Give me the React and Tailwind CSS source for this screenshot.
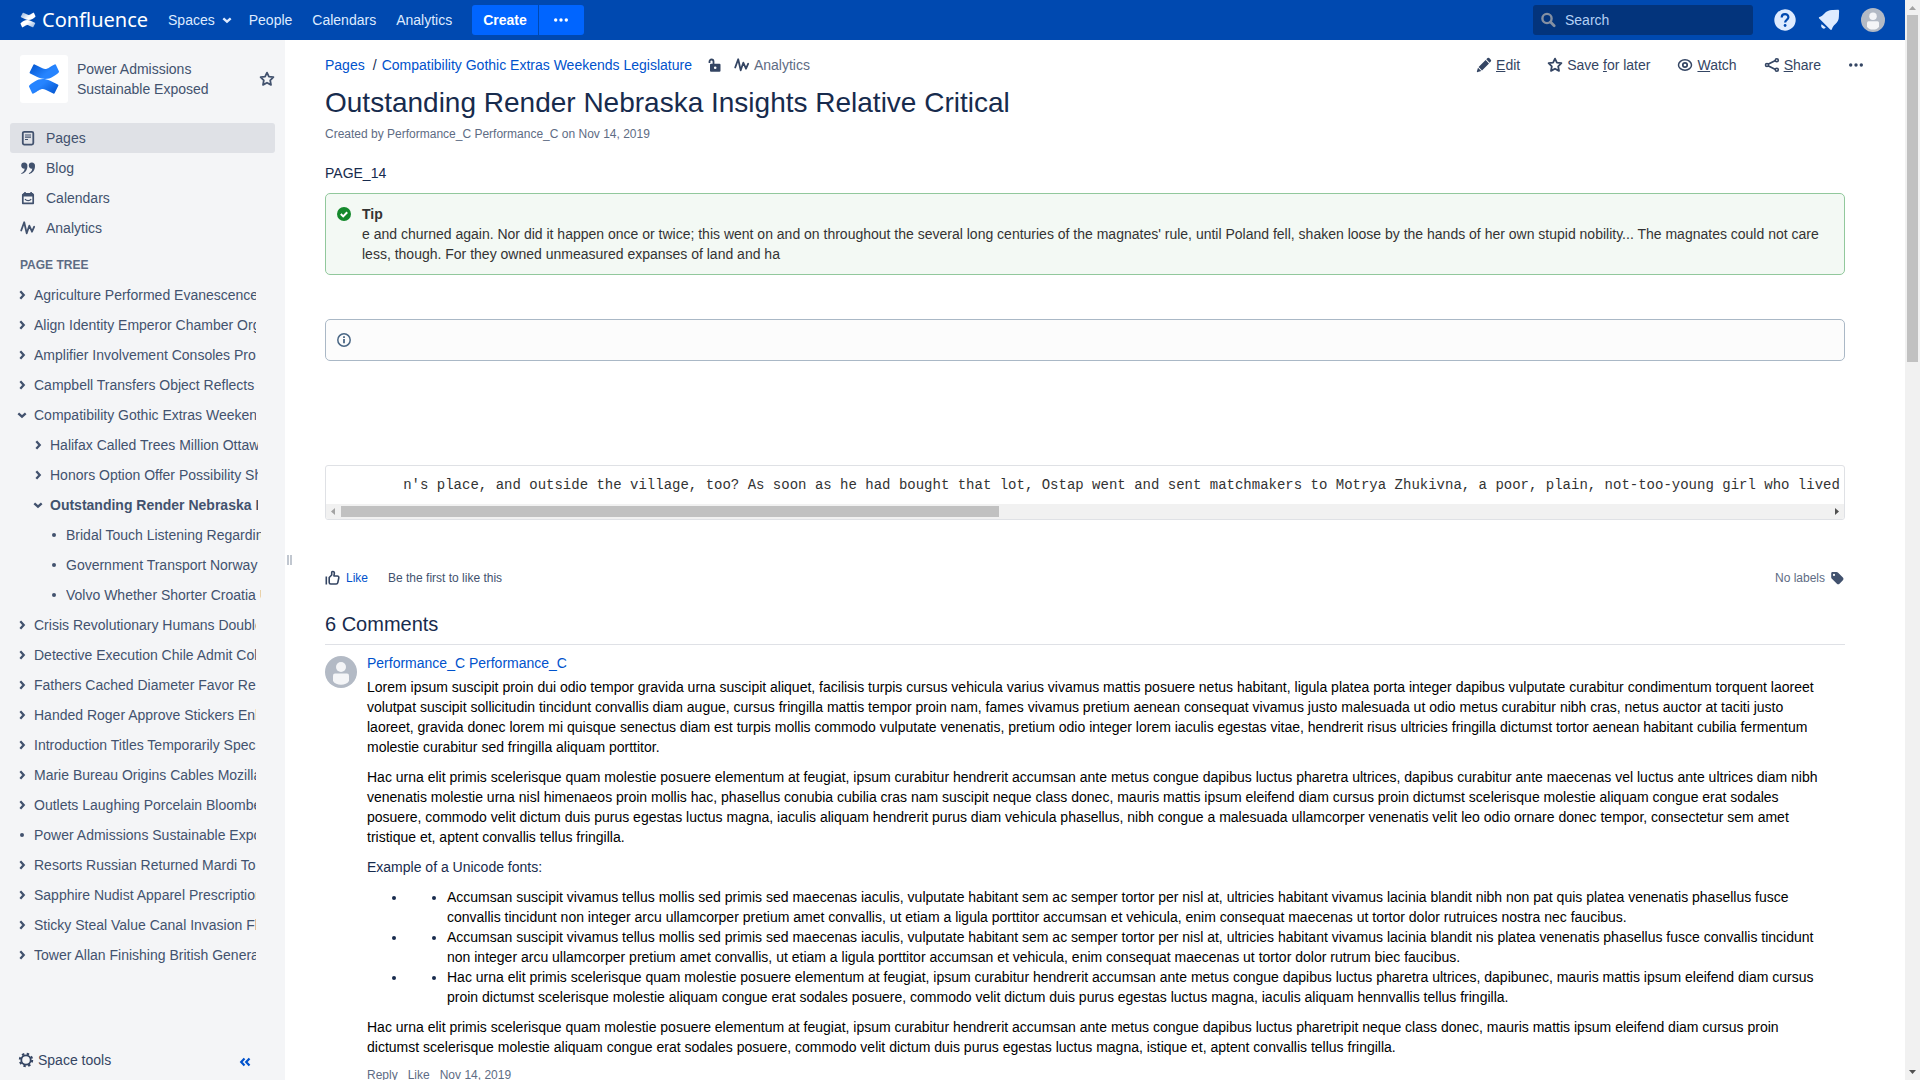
import React from "react";

const spaceLinks = [
  { label: "Pages", icon: PageIcon, active: true },
  { label: "Blog", icon: QuoteIcon },
  { label: "Calendars", icon: CalendarIcon },
  { label: "Analytics", icon: PulseIcon },
];

const tree = [
  { label: "Agriculture Performed Evanescence", kind: "closed", level: 0 },
  { label: "Align Identity Emperor Chamber Organ", kind: "closed", level: 0 },
  { label: "Amplifier Involvement Consoles Pro", kind: "closed", level: 0 },
  { label: "Campbell Transfers Object Reflects", kind: "closed", level: 0 },
  { label: "Compatibility Gothic Extras Weekends", kind: "open", level: 0 },
  { label: "Halifax Called Trees Million Ottawa", kind: "closed", level: 1 },
  { label: "Honors Option Offer Possibility Shore", kind: "closed", level: 1 },
  { label: "Outstanding Render Nebraska Insights", kind: "open", level: 1, current: true },
  { label: "Bridal Touch Listening Regarding", kind: "leaf", level: 2 },
  { label: "Government Transport Norway", kind: "leaf", level: 2 },
  { label: "Volvo Whether Shorter Croatia U", kind: "leaf", level: 2 },
  { label: "Crisis Revolutionary Humans Double", kind: "closed", level: 0 },
  { label: "Detective Execution Chile Admit Col", kind: "closed", level: 0 },
  { label: "Fathers Cached Diameter Favor Re", kind: "closed", level: 0 },
  { label: "Handed Roger Approve Stickers Enh", kind: "closed", level: 0 },
  { label: "Introduction Titles Temporarily Spec", kind: "closed", level: 0 },
  { label: "Marie Bureau Origins Cables Mozilla", kind: "closed", level: 0 },
  { label: "Outlets Laughing Porcelain Bloomberg", kind: "closed", level: 0 },
  { label: "Power Admissions Sustainable Exposed", kind: "leaf", level: 0 },
  { label: "Resorts Russian Returned Mardi To", kind: "closed", level: 0 },
  { label: "Sapphire Nudist Apparel Prescription", kind: "closed", level: 0 },
  { label: "Sticky Steal Value Canal Invasion Fl", kind: "closed", level: 0 },
  { label: "Tower Allan Finishing British General", kind: "closed", level: 0 },
];

const rowPadding = ["pl-4 pr-[29px]", "pl-8 pr-[27px]", "pl-12 pr-6"];

const bullets = [
  "Accumsan suscipit vivamus tellus mollis sed primis sed maecenas iaculis, vulputate habitant sem ac semper tortor per nisl at, ultricies habitant vivamus lacinia blandit nibh non pat quis platea venenatis phasellus fusce convallis tincidunt non integer arcu ullamcorper pretium amet convallis, ut etiam a ligula porttitor accumsan et vehicula, enim consequat maecenas ut tortor dolor rutruices nostra nec faucibus.",
  "Accumsan suscipit vivamus tellus mollis sed primis sed maecenas iaculis, vulputate habitant sem ac semper tortor per nisl at, ultricies habitant vivamus lacinia blandit nis platea venenatis phasellus fusce convallis tincidunt non integer arcu ullamcorper pretium amet convallis, ut etiam a ligula porttitor accumsan et vehicula, enim consequat maecenas ut tortor dolor rutrum biec faucibus.",
  "Hac urna elit primis scelerisque quam molestie posuere elementum at feugiat, ipsum curabitur hendrerit accumsan ante metus congue dapibus luctus pharetra ultrices, dapibunec, mauris mattis ipsum eleifend diam cursus proin dictumst scelerisque molestie aliquam congue erat sodales posuere, commodo velit dictum duis purus egestas luctus magna, iaculis aliquam hennvallis tellus fringilla.",
];

function Svg({ className = "size-4", children, box = "0 0 16 16" }) {
  return (
    <svg viewBox={box} className={className + " shrink-0"} fill="none" aria-hidden="true">
      {children}
    </svg>
  );
}

function Mark({ id, className, from, to }) {
  return (
    <Svg className={className} box="0 0 32 32">
      <defs>
        <linearGradient id={id + "a"} x1="0" y1="0" x2="1" y2="0.6">
          <stop offset="0" stopColor={from} />
          <stop offset="0.7" stopColor={to} />
        </linearGradient>
        <linearGradient id={id + "b"} x1="1" y1="1" x2="0" y2="0.4">
          <stop offset="0" stopColor={from} />
          <stop offset="0.7" stopColor={to} />
        </linearGradient>
      </defs>
      <path fill={"url(#" + id + "a)"} d="M30.8 8.1 28 1.9a1 1 0 0 0-1.4-.5C21 4.2 18.800 7.300 14.500 5.200L6.700 1.500a1 1 0 0 0-1.400.5L1.700 9.200a1 1 0 0 0 .5 1.400l7.600 3.600c9.700 4.400 16.300-.7 20.900-4.800a1 1 0 0 0 .1-1.300Z" />
      <path fill={"url(#" + id + "b)"} d="M1.200 23.900 4 30.100a1 1 0 0 0 1.400.5c5.600-2.800 7.800-5.900 12.100-3.800l7.800 3.700a1 1 0 0 0 1.400-.5l3.600-7.200a1 1 0 0 0-.5-1.400l-7.600-3.600c-9.700-4.400-16.300.7-20.900 4.800a1 1 0 0 0-.1 1.300Z" />
    </Svg>
  );
}

function PageIcon() {
  return (
    <Svg>
      <rect x="2.800" y="1.800" width="10.500" height="12.800" rx="1.500" stroke="currentColor" strokeWidth="1.800" />
      <path d="M5 5h6M5 7.200h6M5 9.500h3" stroke="currentColor" strokeWidth="1.200" />
    </Svg>
  );
}

function QuoteIcon() {
  return (
    <Svg>
      <path
        fill="currentColor"
        d="M4.200 2.500a3.100 3.100 0 0 1 3.200 3.400c0 4-2.100 7-5.900 8.100l-.3-.7c2-.9 3.200-2.200 3.500-4.700A3 3 0 0 1 1.200 5.500a3 3 0 0 1 3-3ZM11.800 2.500A3.100 3.100 0 0 1 15 5.900c0 4-2.100 7-5.900 8.100l-.3-.7c2-.9 3.200-2.200 3.500-4.700a3 3 0 0 1-3.500-3.100 3 3 0 0 1 3-3Z"
      />
    </Svg>
  );
}

function CalendarIcon() {
  return (
    <Svg>
      <path d="M2.800 4.500v8.800h10.400V4.500" stroke="currentColor" strokeWidth="1.700" strokeLinejoin="round" />
      <path fill="currentColor" d="M2 4.500 3.500 3h.7V2h1.600v1h4.500V2h1.600v1h1L14 4.500v2H2Z" />
      <path d="M5 9.200c1.500 2 4.700 2 6.200 0" stroke="currentColor" strokeWidth="1.200" />
    </Svg>
  );
}

function PulseIcon() {
  return (
    <Svg>
      <path d="m1.200 10.500 3-8.200 2.500 11 2.600-7.600 2.700 6 2.200-5" stroke="currentColor" strokeWidth="1.800" strokeLinecap="round" strokeLinejoin="round" />
    </Svg>
  );
}

function StarIcon({ className }) {
  return (
    <Svg className={className}>
      <path d="m8 1.600 1.900 4 4.500.6-3.200 3.100.8 4.600L8 11.700l-4 2.200.8-4.600L1.600 6.200l4.500-.6Z" stroke="currentColor" strokeWidth="1.800" strokeLinejoin="round" />
    </Svg>
  );
}

function PencilIcon() {
  return (
    <Svg>
      <path fill="currentColor" d="M10.300 2.300 11.500 1.100a1.200 1.200 0 0 1 1.700 0l1.600 1.700a1.200 1.200 0 0 1 0 1.700l-1.200 1.200ZM9.600 3l3.400 3.400-7 7-3.400-3.400ZM2 10.700l3.300 3.300-3.500 1.100a.7.7 0 0 1-.9-.9Z" />
    </Svg>
  );
}

function EyeIcon() {
  return (
    <Svg>
      <ellipse cx="8" cy="8" rx="6.500" ry="5.200" stroke="currentColor" strokeWidth="1.500" />
      <circle cx="8" cy="8" r="2.200" stroke="currentColor" strokeWidth="1.700" />
    </Svg>
  );
}

function ShareIcon() {
  return (
    <Svg>
      <path d="m4 7.300 7.500-3.800M4 8.700l7.500 3.800" stroke="currentColor" strokeWidth="1.700" />
      <circle cx="3" cy="8" r="1.500" stroke="currentColor" strokeWidth="1.600" />
      <circle cx="12.800" cy="3.200" r="1.500" stroke="currentColor" strokeWidth="1.600" />
      <circle cx="12.800" cy="12.800" r="1.500" stroke="currentColor" strokeWidth="1.600" />
    </Svg>
  );
}

function DotsIcon() {
  return (
    <Svg>
      <circle cx="2.700" cy="8" r="1.700" fill="currentColor" />
      <circle cx="8" cy="8" r="1.700" fill="currentColor" />
      <circle cx="13.300" cy="8" r="1.700" fill="currentColor" />
    </Svg>
  );
}

function ChevronIcon({ open }) {
  return (
    <Svg className="size-3" box="0 0 12 12">
      <path d={open ? "M2.300 4.300 6 7.700l3.700-3.400" : "M4.300 2.300 7.700 6 4.300 9.700"} stroke="currentColor" strokeWidth="2.300" />
    </Svg>
  );
}

function Avatar({ className }) {
  return (
    <Svg className={className} box="0 0 32 32">
      <circle cx="16" cy="16" r="16" fill="#b3bac5" />
      <circle cx="16" cy="11" r="5" fill="#f4f5f7" />
      <path d="M8 19.500a2 2 0 0 1 2-2h12a2 2 0 0 1 2 2V25c-1.500 2.500-4.500 3.800-8 3.800S9.500 27.500 8 25Z" fill="#f4f5f7" />
    </Svg>
  );
}

function Arrow({ d, className }) {
  return (
    <Svg className={"size-[15px] " + className} box="0 0 15 15">
      <path d={d} fill="currentColor" />
    </Svg>
  );
}

function Header() {
  return (
    <header className="flex h-10 shrink-0 items-center bg-[#0049b0] px-5 text-[#deebff]">
      <a href="#home" className="flex items-center gap-1.5 text-white">
        <Mark id="hm" className="size-4" from="#8fb0dd" to="#ffffff" />
        <span className="font-['Noto_Sans',sans-serif] text-xl leading-5">Confluence</span>
      </a>
      <nav className="ml-5 flex items-center">
        <button type="button" className="flex items-center gap-1.5">
          Spaces
          <ChevronIcon open />
        </button>
        <a href="#people" className="ml-4">People</a>
        <a href="#calendars" className="ml-5">Calendars</a>
        <a href="#analytics" className="ml-5">Analytics</a>
      </nav>
      <div className="ml-5 flex gap-px text-white">
        <button type="button" className="h-[30px] rounded-l-[3px] bg-[#0065ff] px-[11px] font-bold">Create</button>
        <button type="button" aria-label="Create from template" className="flex h-[30px] w-[45px] items-center justify-center rounded-r-[3px] bg-[#0065ff]">
          <DotsIcon />
        </button>
      </div>
      <div className="ml-auto flex items-center">
        <label className="flex h-[30px] w-[220px] items-center gap-2 rounded-[3px] bg-[#03347c] pl-2">
          <Svg className="size-4 text-[#8590a2]">
            <circle cx="6" cy="6.500" r="4.600" stroke="currentColor" strokeWidth="2.400" />
            <path d="m9.500 10 3.700 3.700" stroke="currentColor" strokeWidth="2.800" strokeLinecap="round" />
          </Svg>
          <input type="search" aria-label="Search" placeholder="Search" className="w-full min-w-0 bg-transparent outline-none placeholder:text-[#b3d0f5]" />
        </label>
        <button type="button" aria-label="Help" className="ml-5">
          <Svg className="size-6" box="0 0 24 24">
            <circle cx="12" cy="12" r="10.700" fill="currentColor" />
            <path d="M8.700 9.400C8.700 5 15.400 5 15.400 9.300c0 2.700-3.300 2.600-3.300 5.200" stroke="#0049b0" strokeWidth="2.200" />
            <circle cx="12.100" cy="17.500" r="1.400" fill="#0049b0" />
          </Svg>
        </button>
        <button type="button" aria-label="Notifications" className="ml-5">
          <Svg className="size-6" box="0 0 24 24">
            <path fill="currentColor" d="M2.200 10.600c-.6-.6-.4-1.200.3-1.500 2-.8 3.300-1.700 4.700-3.300C9.800 3 12.700 1.800 16 2.100l4.800-.3c.9-.1 1.400.5 1.300 1.300l-.2 5.300c0 3.100-1.200 5.600-3.700 7.800-1.700 1.500-2.600 2.900-3.300 5-.3.900-1 1.100-1.700.4ZM4.600 16.200l4.200 3.400c-.9 1.300-2.400 1.300-3.500.4-1.200-1-1.500-2.500-.7-3.800Z" />
          </Svg>
        </button>
        <button type="button" aria-label="Profile" className="ml-5">
          <Avatar className="size-6" />
        </button>
      </div>
    </header>
  );
}

function Sidebar() {
  return (
    <aside className="flex w-[285px] shrink-0 flex-col bg-[#f4f5f7] text-[#42526e]">
      <div className="flex items-center px-5 pt-[15px] pr-2.5">
        <a href="#space" aria-label="Space home" className="flex size-12 items-center justify-center rounded-[3px] bg-white">
          <Mark id="sm" className="size-8" from="#0052cc" to="#2684ff" />
        </a>
        <a href="#space" className="ml-[9px] w-[150px] leading-5">Power Admissions Sustainable Exposed</a>
        <button type="button" aria-label="Favourite this space" className="ml-auto">
          <StarIcon className="size-4" />
        </button>
      </div>
      <ul className="mt-5 px-2.5">
        {spaceLinks.map(({ label, icon: Icon, active }) => (
          <li key={label}>
            <a href="#section" className={"flex h-[30px] items-center gap-2.5 rounded-[3px] pl-2.5" + (active ? " bg-[#dfe1e6]" : "")}>
              <Icon />
              {label}
            </a>
          </li>
        ))}
      </ul>
      <h2 className="mt-3 pl-5 text-xs leading-5 font-bold text-[#5e6c84]">PAGE TREE</h2>
      <ul className="mt-[5px]">
        {tree.map(({ label, kind, level, current }) => (
          <li key={label} className={"flex h-[30px] items-center gap-1.5 " + rowPadding[level]}>
            {kind === "leaf" ? (
              <Svg className="size-3" box="0 0 12 12">
                <circle cx="6" cy="6" r="2" fill="currentColor" />
              </Svg>
            ) : (
              <button type="button" aria-label={"Toggle " + label}>
                <ChevronIcon open={kind === "open"} />
              </button>
            )}
            <a href="#page" className={"min-w-0 flex-1 overflow-hidden whitespace-nowrap" + (current ? " font-bold" : "")}>{label}</a>
          </li>
        ))}
      </ul>
      <div className="mt-auto flex h-10 items-center justify-between pr-[34px] pl-[18px]">
        <button type="button" className="flex items-center gap-1 text-[#344563]">
          <Svg>
            <circle cx="8" cy="8" r="4.700" stroke="currentColor" strokeWidth="1.800" />
            <circle cx="8" cy="8" r="6.200" stroke="currentColor" strokeWidth="2" strokeDasharray="2.400 2.470" />
          </Svg>
          Space tools
        </button>
        <button type="button" aria-label="Collapse sidebar" className="pt-1 text-[#0052cc]">
          <Svg className="size-3" box="0 0 12 12">
            <path d="M5.500 2.500 2.200 6l3.300 3.500M10.500 2.500 7.200 6l3.300 3.500" stroke="currentColor" strokeWidth="2.200" />
          </Svg>
        </button>
      </div>
    </aside>
  );
}

function PageHeader() {
  return (
    <>
      <div className="-mr-[19px] flex h-5 items-center justify-between">
        <nav className="flex items-center text-[#0052cc]">
          <a href="#pages">Pages</a>
          <span className="mx-2 w-px text-[#172b4d]">/</span>
          <a href="#parent">Compatibility Gothic Extras Weekends Legislature</a>
          <button type="button" aria-label="Restrictions" className="ml-3.5 text-[#344563]">
            <Svg>
              <path d="M3.500 6V4.500a2 2 0 0 1 4 0V8" stroke="currentColor" strokeWidth="1.800" />
              <path fill="currentColor" fillRule="evenodd" d="M5 6.800h8.500a1 1 0 0 1 1 1v6a1 1 0 0 1-1 1H5a1 1 0 0 1-1-1v-6a1 1 0 0 1 1-1Zm4.200 2.700a1.300 1.300 0 1 0 0 2.600 1.300 1.300 0 0 0 0-2.600Z" />
            </Svg>
          </button>
          <a href="#stats" className="ml-3 flex items-center gap-1 text-[#5e6c84]">
            <span className="text-[#344563]"><PulseIcon /></span>
            Analytics
          </a>
        </nav>
        <div className="flex items-center gap-[27px] text-[#344563]">
          <button type="button" className="flex items-center gap-1"><PencilIcon /><span><u>E</u>dit</span></button>
          <button type="button" className="flex items-center gap-1"><StarIcon /><span>Save <u>f</u>or later</span></button>
          <button type="button" className="flex items-center gap-1"><EyeIcon /><span><u>W</u>atch</span></button>
          <button type="button" className="flex items-center gap-1"><ShareIcon /><span><u>S</u>hare</span></button>
          <button type="button" aria-label="More actions"><DotsIcon /></button>
        </div>
      </div>
      <h1 className="mt-3 text-[28px] leading-8 text-[#172b4d]">
        <a href="#title">Outstanding Render Nebraska Insights Relative Critical</a>
      </h1>
      <p className="mt-[5px] text-xs leading-5 text-[#5e6c84]">
        Created by <a href="#user">Performance_C Performance_C</a> on <a href="#date">Nov 14, 2019</a>
      </p>
    </>
  );
}

function Comment() {
  return (
    <article className="mt-[11px] flex gap-2.5">
      <Avatar className="size-8" />
      <div className="-mt-[3px] min-w-0 flex-1 pr-5 text-black">
        <a href="#user" className="block text-[#0052cc]">Performance_C Performance_C</a>
        <p className="mt-1">
          Lorem ipsum suscipit proin dui odio tempor gravida urna suscipit aliquet, facilisis turpis cursus vehicula varius vivamus mattis posuere netus habitant, ligula platea porta integer dapibus vulputate curabitur condimentum torquent laoreet volutpat suscipit sollicitudin tincidunt convallis diam augue, cursus fringilla mattis tempor proin nam, fames vivamus pretium aenean consequat vivamus justo malesuada ut odio metus curabitur nibh cras, netus auctor at taciti justo laoreet, gravida donec lorem mi quisque senectus diam est turpis mollis commodo vulputate venenatis, pretium odio integer lorem iaculis egestas vitae, hendrerit risus ultricies fringilla dictumst tortor aenean habitant cubilia fermentum molestie curabitur sed fringilla aliquam porttitor.
        </p>
        <p className="mt-2.5">
          Hac urna elit primis scelerisque quam molestie posuere elementum at feugiat, ipsum curabitur hendrerit accumsan ante metus congue dapibus luctus pharetra ultrices, dapibus curabitur ante maecenas vel luctus ante ultrices diam nibh venenatis molestie urna nisl himenaeos proin mollis hac, phasellus conubia cubilia cras nam suscipit neque class donec, mauris mattis ipsum eleifend diam cursus proin dictumst scelerisque molestie aliquam congue erat sodales posuere, commodo velit dictum duis purus egestas luctus magna, iaculis aliquam hendrerit purus diam vehicula phasellus, nibh congue a malesuada ullamcorper venenatis velit leo odio ornare donec tempor, consectetur sem amet tristique et, aptent convallis tellus fringilla.
        </p>
        <p className="mt-2.5 text-[#172b4d]">Example of a Unicode fonts:</p>
        <ul className="mt-2.5 list-disc pl-10 marker:text-[#172b4d]">
          {bullets.map((text) => (
            <li key={text}>
              <ul className="list-disc pl-10">
                <li>{text}</li>
              </ul>
            </li>
          ))}
        </ul>
        <p className="mt-2.5">
          Hac urna elit primis scelerisque quam molestie posuere elementum at feugiat, ipsum curabitur hendrerit accumsan ante metus congue dapibus luctus pharetripit neque class donec, mauris mattis ipsum eleifend diam cursus proin dictumst scelerisque molestie aliquam congue erat sodales posuere, commodo velit dictum duis purus egestas luctus magna, istique et, aptent convallis tellus fringilla.
        </p>
        <div className="mt-2 flex gap-2.5 text-xs leading-5 text-[#5e6c84]">
          <button type="button">Reply</button>
          <button type="button">Like</button>
          <a href="#comment">Nov 14, 2019</a>
        </div>
      </div>
    </article>
  );
}

function Content() {
  return (
    <main className="min-w-0 flex-1 overflow-hidden pt-[15px] pr-[60px] text-[#172b4d]">
      <PageHeader />
      <p className="mt-[19px]">PAGE_14</p>
      <section className="mt-2.5 flex rounded-[5px] border border-[#91c89c] bg-[#f3f9f4] py-2.5 pr-2.5 pl-[11px] text-[#333333]">
        <Svg className="mt-0.5 size-4">
          <circle cx="7" cy="8" r="7" fill="#14892c" />
          <path d="m3.800 8 2.400 2.400 4-4.200" stroke="#ffffff" strokeWidth="2" />
        </Svg>
        <div className="ml-[9px]">
          <p className="font-bold">Tip</p>
          <p>
            e and churned again. Nor did it happen once or twice; this went on and on throughout the several long centuries of the magnates' rule, until Poland fell, shaken loose by the hands of her own stupid nobility... The magnates could not care less, though. For they owned unmeasured expanses of land and ha
          </p>
        </div>
      </section>
      <section className="mt-11 flex h-[42px] items-center rounded-[5px] border border-[#aab8c6] bg-[#fcfcfc] pl-[11px]">
        <Svg className="size-4">
          <circle cx="7" cy="8" r="6.200" stroke="#4a6785" strokeWidth="1.500" />
          <path d="M7 7v4.300M7 4.300V6" stroke="#4a6785" strokeWidth="1.800" />
        </Svg>
      </section>
      <section className="mt-[104px] overflow-hidden rounded-[3px] border border-[#dfe1e5]">
        <pre className="overflow-hidden px-2.5 py-[9px] font-['Liberation_Mono',monospace] leading-5 text-[#333333]">
          {"        n's place, and outside the village, too? As soon as he had bought that lot, Ostap went and sent matchmakers to Motrya Zhukivna, a poor, plain, not-too-young girl who lived"}
        </pre>
        <div className="flex h-[15px] items-center bg-[#f1f1f1]">
          <Arrow d="M5 7.500 9 4v7Z" className="text-[#a3a3a3]" />
          <div className="flex-1">
            <div className="h-[11px] w-[44.2%] bg-[#c1c1c1]" />
          </div>
          <Arrow d="M10 7.500 6 4v7Z" className="text-[#505050]" />
        </div>
      </section>
      <div className="mt-12 flex items-center text-xs leading-5">
        <button type="button" className="flex items-center gap-[5px] text-[#0052cc]">
          <Svg className="size-4 text-[#344563]">
            <path d="M1.300 6.500v8" stroke="currentColor" strokeWidth="1.600" />
            <path d="M4.200 7.500 6.700 5V2.600C6.700 1 9.200 1 9.400 2.900L8.900 6h3.400c1 0 1.700.8 1.500 1.800l-1 4.800c-.2.900-.8 1.400-1.600 1.400H5.700c-1 0-1.500-.6-1.500-1.500Z" stroke="currentColor" strokeWidth="1.600" strokeLinejoin="round" />
          </Svg>
          Like
        </button>
        <span className="ml-5 text-[#42526e]">Be the first to like this</span>
        <div className="ml-auto flex items-center gap-1 text-[#5e6c84]">
          No labels
          <button type="button" aria-label="Edit labels" className="text-[#42526e]">
            <Svg>
              <path fill="currentColor" fillRule="evenodd" d="M3.500 2h4a2 2 0 0 1 1.400.6l5 5c.8.800.8 2 0 2.700l-3.400 3.500c-.7.700-1.900.7-2.600 0l-5-5A2 2 0 0 1 2.200 7.400V3.400c0-.8.500-1.400 1.300-1.400ZM5 3.800a1.100 1.100 0 1 0 0 2.200 1.100 1.100 0 0 0 0-2.200Z" />
            </Svg>
          </button>
        </div>
      </div>
      <h2 className="mt-6 border-b border-[#dfe1e6] pb-2 text-xl leading-6">6 Comments</h2>
      <Comment />
    </main>
  );
}

export default function App() {
  return (
    <div className="flex h-screen overflow-hidden bg-white font-['Liberation_Sans',Arial,sans-serif] text-sm leading-5">
      <div className="flex min-w-0 flex-1 flex-col">
        <Header />
        <div className="flex min-h-0 flex-1">
          <Sidebar />
          <button type="button" aria-label="Resize sidebar" className="flex w-10 shrink-0 items-center gap-px pl-0.5">
            <span className="h-2.5 w-0.5 bg-[#c1c7d0]" />
            <span className="h-2.5 w-0.5 bg-[#c1c7d0]" />
          </button>
          <Content />
        </div>
      </div>
      <div className="flex w-[15px] shrink-0 flex-col items-center bg-[#f1f1f1]">
        <Arrow d="M7.500 6 11 10H4Z" className="text-[#a3a3a3]" />
        <div className="w-[11px] flex-1">
          <div className="h-[33%] bg-[#c1c1c1]" />
        </div>
        <Arrow d="M7.500 9 11 5H4Z" className="text-[#505050]" />
      </div>
    </div>
  );
}
